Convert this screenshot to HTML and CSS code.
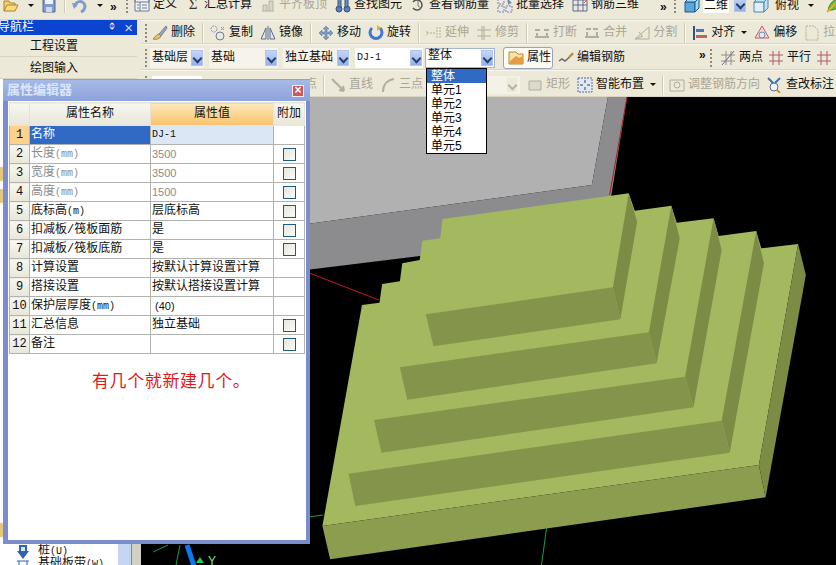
FILE: index.html
```html
<!DOCTYPE html>
<html lang="zh">
<head>
<meta charset="utf-8">
<title>属性编辑器</title>
<link rel="stylesheet" href="styles.css">
</head>
<body>
<div class="app">
  <div class="bar top">
    <div class="quick">
      <svg class="ic" viewBox="0 0 16 16"><path d="M1 14V4h5l1 2h5v2" fill="#f4d06a" stroke="#a8842c"/><path d="M1 14l3-6h11l-3 6z" fill="#f8dc84" stroke="#a8842c"/></svg>
      <i class="caret"></i>
      <svg class="ic" viewBox="0 0 16 16"><path d="M2 1h12v14H2z" fill="#7f9ccf" stroke="#4f6aa0"/><path d="M4 1h8v6H4z" fill="#eef2f8"/><path d="M5 10h6v5H5z" fill="#d4d8e0"/></svg>
      <i class="sep"></i>
      <svg class="ic" viewBox="0 0 16 16"><path d="M3 10C3 3 12 3 13 9c0 3-2 5-4 6" fill="none" stroke="#7e9bd0" stroke-width="3"/><path d="M0 6l6 1-4 5z" fill="#7e9bd0"/></svg>
      <i class="caret"></i>
      <span class="chev">»</span>
    </div>
    <i class="grip"></i>
    <div class="tool"><svg class="ic" viewBox="0 0 16 16"><path d="M1 2h14v12H1z" fill="#eef1f5" stroke="#6d7d90"/><path d="M1 2h14v3H1zM6 5v9M3 8h2M3 11h2M8 8h5M8 11h5" fill="none" stroke="#6d7d90"/></svg><span>定义</span></div>
    <div class="tool"><span class="ic sigma">Σ</span><span>汇总计算</span></div>
    <div class="tool off"><svg class="ic" viewBox="0 0 16 16"><path d="M2 14h12M3 14V8h4v6M9 14V4h4v10" fill="#d8d6c8" stroke="#b4b2a4"/></svg><span>平齐板顶</span></div>
    <div class="tool"><svg class="ic" viewBox="0 0 16 16"><path d="M1 12a3 3 0 1 0 6 0 3 3 0 1 0-6 0M9 12a3 3 0 1 0 6 0 3 3 0 1 0-6 0" fill="#5d7fb8" stroke="#34507c"/><path d="M3 2h3v8H3zM10 2h3v8h-3z" fill="#6f8db8" stroke="#34507c"/></svg><span>查找图元</span></div>
    <div class="tool"><svg class="ic" viewBox="0 0 16 16"><path d="M3 5a5 5 0 1 1 0 6" fill="none" stroke="#555" stroke-width="1.5"/><path d="M8 4v5l3 2" fill="none" stroke="#777"/></svg><span>查看钢筋量</span></div>
    <div class="tool"><svg class="ic" viewBox="0 0 16 16"><path d="M1 1h6v6H1zM1 9h6v6H1zM9 9h6v6H9z" fill="#e8e8ee" stroke="#7c8496" stroke-dasharray="2 1"/><path d="M10 1l5 5-3 1 1 3-2-3z" fill="#6f8db8"/></svg><span>批量选择</span></div>
    <div class="tool"><svg class="ic" viewBox="0 0 16 16"><path d="M1 3h14v11H1zM6 3v11M11 3v11M1 8h14" fill="none" stroke="#5a6a9a"/><path d="M12 1l3 2-3 3" fill="none" stroke="#c46a4a"/></svg><span>钢筋三维</span></div>
    <span class="chev far">»</span>
    <i class="grip"></i>
    <div class="view">
      <svg class="ic" viewBox="0 0 16 16"><path d="M1 5h10v10H1z" fill="#58a8dc" stroke="#1c5a8c"/><path d="M1 5l4-4h10l-4 4zM11 5l4-4v10l-4 4z" fill="#a4d8f0" stroke="#1c5a8c"/></svg>
      <span class="viewfield">二维</span>
      <i class="drop"></i>
      <svg class="ic" viewBox="0 0 16 16"><path d="M1 5h10v10H1z" fill="#e0f0fa" stroke="#4c88b0"/><path d="M1 5l4-4h10l-4 4zM11 5l4-4v10l-4 4z" fill="#bfe2f4" stroke="#4c88b0"/></svg>
      <span class="viewtext">俯视</span>
      <i class="caret"></i>
      <svg class="ic" viewBox="0 0 16 16"><path d="M2 14C3 6 8 2 15 1c0 7-4 12-10 12z" fill="#6cb83c" stroke="#3c8420"/><path d="M1 15l9-9" stroke="#e8b020" stroke-width="2"/></svg>
    </div>
  </div>

  <aside class="nav">
    <header class="navhead"><span class="navtitle">导航栏</span><span class="pin">ᛰ</span><span class="navx">×</span></header>
    <div class="navitem">工程设置</div>
    <div class="navitem">绘图输入</div>
    <div class="tree">
      <div class="treebody">
        <i class="peek"></i>
        <i class="peek"></i>
        <i class="peek low"></i>
        <div class="treerow"><svg class="ic small" viewBox="0 0 12 14"><path d="M2 0h8v6h2L6 14 0 6h2z" fill="#2e64b4"/><path d="M4 2h4v4H4z" fill="#dce8fa"/></svg><span>桩<span class="unit">(U)</span></span></div>
        <div class="treerow"><svg class="ic small" viewBox="0 0 12 14"><path d="M0 3h12M2 3v8M10 3v8" stroke="#2e64b4" fill="none"/></svg><span>基础板带<span class="unit">(W)</span></span></div>
      </div>
      <div class="navscroll"></div>
      <div class="navedge"></div>
    </div>
  </aside>

  <div class="bar row2">
    <i class="grip"></i>
    <div class="tool"><svg class="ic" viewBox="0 0 16 16"><path d="M14 1L7 9l2 2 6-8z" fill="#9aa6c0" stroke="#7a8098"/><path d="M7 9c-2 0-3 2-6 5 3 1 7 0 8-3z" fill="#e0c070" stroke="#a08a40"/></svg><span>删除</span></div>
    <i class="sep"></i>
    <div class="tool"><svg class="ic" viewBox="0 0 16 16"><circle cx="4" cy="4" r="3" fill="none" stroke="#8a96ac" stroke-dasharray="2 1"/><circle cx="10" cy="11" r="4" fill="none" stroke="#6a7c9c"/><path d="M11 2l3 3M14 2l-3 3" stroke="#8a96ac"/></svg><span>复制</span></div>
    <div class="tool"><svg class="ic" viewBox="0 0 16 16"><path d="M6 3v11H1zM10 3v11h5z" fill="#dfe6f0" stroke="#5a6c8c"/><path d="M8 1v14" stroke="#5a6c8c"/></svg><span>镜像</span></div>
    <i class="sep"></i>
    <div class="tool"><svg class="ic" viewBox="0 0 16 16"><path d="M8 1l3 3H9v3h3V5l3 3-3 3V9H9v3h2l-3 3-3-3h2V9H4v2L1 8l3-3v2h3V4H5z" fill="#7f9dc8" stroke="#56709c" stroke-width=".5"/></svg><span>移动</span></div>
    <div class="tool"><svg class="ic" viewBox="0 0 16 16"><path d="M4 3a6 6 0 1 0 8 0" fill="none" stroke="#3f78d0" stroke-width="3"/><path d="M9 0v6l4-3z" fill="#e8b020"/></svg><span>旋转</span></div>
    <i class="sep"></i>
    <div class="tool off"><svg class="ic" viewBox="0 0 16 16"><path d="M1 8h9M11 2v12M14 2v12M1 6v4" fill="none" stroke="#b0ae9e" stroke-dasharray="2 1"/></svg><span>延伸</span></div>
    <div class="tool off"><svg class="ic" viewBox="0 0 16 16"><path d="M1 5h14M1 11h14M8 1v14M6 1v14" fill="none" stroke="#b0ae9e"/></svg><span>修剪</span></div>
    <i class="sep"></i>
    <div class="tool off"><svg class="ic" viewBox="0 0 16 16"><path d="M1 5h5M10 5h5M1 12h14M3 8v4M13 8v4" fill="none" stroke="#b0ae9e" stroke-width="2"/></svg><span>打断</span></div>
    <div class="tool off"><svg class="ic" viewBox="0 0 16 16"><path d="M2 4h5M9 4h5M1 12h14M3 7v5M13 7v5" fill="none" stroke="#b0ae9e" stroke-width="2"/></svg><span>合并</span></div>
    <div class="tool off"><svg class="ic" viewBox="0 0 16 16"><path d="M1 14L15 2v12zM1 14l8-3M5 7l3 4" fill="none" stroke="#b0ae9e"/></svg><span>分割</span></div>
    <i class="sep"></i>
    <div class="tool"><svg class="ic" viewBox="0 0 16 16"><path d="M2 1v14" stroke="#31507c" stroke-width="2"/><path d="M4 4h8v3H4z" fill="#4c78b8"/><path d="M4 10h11v3H4z" fill="#c06060"/></svg><span>对齐</span><i class="caret"></i></div>
    <div class="tool"><svg class="ic" viewBox="0 0 16 16"><path d="M8 1l7 12H1z" fill="#f4d8d8" stroke="#c06060"/><circle cx="8" cy="10" r="3" fill="#dce8f8" stroke="#6a8cc0"/></svg><span>偏移</span></div>
    <div class="tool off"><svg class="ic" viewBox="0 0 16 16"><path d="M2 1h8l4 4v10H2z" fill="none" stroke="#b0ae9e" stroke-dasharray="2 1"/></svg><span>拉</span></div>
  </div>

  <div class="bar row3">
    <i class="grip"></i>
    <div class="combo w54"><span>基础层</span><i class="drop"></i></div>
    <div class="combo w69"><span>基础</span><i class="drop"></i></div>
    <div class="combo w67"><span>独立基础</span><i class="drop"></i></div>
    <div class="combo w68 white"><span class="mono">DJ-1</span><i class="drop"></i></div>
    <div class="combo w70 open"><span>整体</span><i class="drop"></i></div>
    <div class="tool pressed"><svg class="ic" viewBox="0 0 16 16"><path d="M1 2h7l2 2h5v10H1z" fill="#f6e2a8" stroke="#b08a38"/><path d="M2 11l6-5 3 2 4-2v8H2z" fill="#e89c40"/></svg><span>属性</span></div>
    <div class="tool"><svg class="ic" viewBox="0 0 16 16"><path d="M1 11l3-2 3 2 8-7" fill="none" stroke="#686868" stroke-width="1.5"/><path d="M11 7l4-4" stroke="#c09040" stroke-width="2"/></svg><span>编辑钢筋</span></div>
    <span class="chev mid">»</span>
    <i class="grip"></i>
    <div class="tool first"><svg class="ic" viewBox="0 0 16 16"><path d="M1 5h14M1 11h14M6 1v14M11 1v14" stroke="#9a8a88" fill="none"/><path d="M2 15L14 1" stroke="#607090"/></svg><span>两点</span></div>
    <div class="tool"><svg class="ic" viewBox="0 0 16 16"><path d="M1 5h14M1 11h14M5 1v14M11 1v14" stroke="#b05870" fill="none"/></svg><span>平行</span></div>
    <div class="tool"><svg class="ic" viewBox="0 0 16 16"><path d="M1 5h14M1 11h14M5 1v14M11 1v14" stroke="#b05870" fill="none"/></svg></div>
  </div>

  <div class="bar row4">
    <i class="grip"></i>
    <div class="field w50"></div>
    <div class="tool off behind"><svg class="ic" viewBox="0 0 16 16"><circle cx="8" cy="8" r="5" fill="none" stroke="#b0ae9e"/></svg><span>点</span></div>
    <i class="sep"></i>
    <div class="tool off"><svg class="ic" viewBox="0 0 16 16"><path d="M2 2l12 12M14 14l-1-5M14 14l-5-1" fill="none" stroke="#b0ae9e" stroke-width="2"/></svg><span>直线</span></div>
    <div class="tool off"><svg class="ic" viewBox="0 0 16 16"><path d="M3 15C3 8 7 3 14 2" fill="none" stroke="#b0ae9e" stroke-width="2"/></svg><span>三点</span></div>
    <div class="field w35"><i class="drop off"></i></div>
    <div class="tool off"><svg class="ic" viewBox="0 0 16 16"><path d="M2 4h12v9H2z" fill="#dcdacc" stroke="#b0ae9e"/></svg><span>矩形</span></div>
    <div class="tool"><svg class="ic" viewBox="0 0 16 16"><path d="M1 1h14v14H1z" fill="#dfe8f4" stroke="#5a6c8c" stroke-dasharray="2 1"/><path d="M8 3v3M8 10v3M3 8h3M10 8h3" stroke="#33415c"/></svg><span>智能布置</span><i class="caret"></i></div>
    <i class="sep"></i>
    <div class="tool off"><svg class="ic" viewBox="0 0 16 16"><path d="M1 3h14v11H1z" fill="none" stroke="#b0ae9e"/><circle cx="8" cy="8" r="3" fill="none" stroke="#b0ae9e"/></svg><span>调整钢筋方向</span></div>
    <div class="tool"><svg class="ic" viewBox="0 0 16 16"><path d="M1 1l6 6M13 1L8 6" stroke="#3c74c0" stroke-width="2"/><circle cx="7" cy="10" r="4" fill="#eef4fa" stroke="#5a6c8c"/><path d="M10 13l3 3" stroke="#c09040" stroke-width="2"/></svg><span>查改标注</span></div>
  </div>

  <main class="scene">
    <svg class="scene3d" viewBox="141 97 695 468">
      <g transform="translate(310 170) scale(.3355 .3333)">
        <path class="gl" d="M-30-219H888L840 45-30 165z"/>
        <path class="gd" d="M-30 165L840 45 888-219H945L880 190-30 302z"/>
        <path class="axis-r" d="M945-219L893 75M0 310L205 390"/>
        <path class="axis-g" d="M0 1040L40 1035M705 1075L690 1185"/>
        <path class="top" d="M37 1068L155 405 207 398 215 342 268 334 275 280 327 270 335 212 388 205 395 147 950 70 968 122 1077 107 1093 158 1203 145 1218 198 1330 183 1345 235 1455 222 1338 885z"/>
        <path class="bottom" d="M37 1068L60 1168 1358 982 1338 885z"/>
        <path class="side" d="M1338 885L1358 982 1478 315 1455 222z"/>
        <path class="side" d="M1330 183L1353 280 1251 848 1227 752z"/>
        <path class="front" d="M115 911L135 1008 1251 848 1227 752z"/>
        <path class="side" d="M1203 145L1227 240 1143 712 1118 620z"/>
        <path class="front" d="M191 750L213 848 1143 712 1118 620z"/>
        <path class="side" d="M1077 107L1102 205 1033 580 1010 487z"/>
        <path class="front" d="M268 592L290 689 1033 580 1010 487z"/>
        <path class="side" d="M950 70L975 155 925 448 903 352z"/>
        <path class="front" d="M345 433L368 529 925 448 903 352z"/>
      </g>
      <path class="axis-g" d="M153 552L168 545M180 545L176 565"/>
      <path class="axis-b" d="M187 545L194 566"/>
      <path class="arrow" d="M200 557l4 6h-8z"/>
      <text class="axislabel" x="208" y="565">Y</text>
    </svg>
  </main>
</div>

<section class="dialog">
  <header class="dialoghead"><span>属性编辑器</span><span class="close">×</span></header>
  <div class="dialogbody">
    <table class="props">
      <colgroup><col class="c0"><col class="c1"><col class="c2"><col class="c3"></colgroup>
      <thead><tr><th></th><th>属性名称</th><th class="hot">属性值</th><th>附加</th></tr></thead>
      <tbody>
        <tr class="cur"><th>1</th><td class="name">名称</td><td class="val mono">DJ-1</td><td></td></tr>
        <tr class="dim"><th>2</th><td>长度<span class="unit">(mm)</span></td><td class="num">3500</td><td><i class="check"></i></td></tr>
        <tr class="dim"><th>3</th><td>宽度<span class="unit">(mm)</span></td><td class="num">3500</td><td><i class="check"></i></td></tr>
        <tr class="dim"><th>4</th><td>高度<span class="unit">(mm)</span></td><td class="num">1500</td><td><i class="check"></i></td></tr>
        <tr><th>5</th><td>底标高<span class="unit">(m)</span></td><td>层底标高</td><td><i class="check"></i></td></tr>
        <tr><th>6</th><td>扣减板/筏板面筋</td><td>是</td><td><i class="check"></i></td></tr>
        <tr><th>7</th><td>扣减板/筏板底筋</td><td>是</td><td><i class="check"></i></td></tr>
        <tr><th>8</th><td>计算设置</td><td>按默认计算设置计算</td><td></td></tr>
        <tr><th>9</th><td>搭接设置</td><td>按默认搭接设置计算</td><td></td></tr>
        <tr><th>10</th><td>保护层厚度<span class="unit">(mm)</span></td><td class="num ind">(40)</td><td></td></tr>
        <tr><th>11</th><td>汇总信息</td><td>独立基础</td><td><i class="check"></i></td></tr>
        <tr><th>12</th><td>备注</td><td></td><td><i class="check"></i></td></tr>
      </tbody>
    </table>
    <p class="note">有几个就新建几个。</p>
  </div>
</section>

<ul class="menu">
  <li class="sel">整体</li>
  <li>单元1</li>
  <li>单元2</li>
  <li>单元3</li>
  <li>单元4</li>
  <li>单元5</li>
</ul>
</body>
</html>
```

FILE: styles.css
```css
* { box-sizing: border-box; }
html, body { margin: 0; height: 100%; overflow: hidden; background: #000; }
body {
  position: relative;
  width: 836px;
  height: 565px;
  font: 12px/14px "Liberation Mono", "Noto Sans CJK SC", sans-serif;
  color: #111;
}
i { display: block; font-style: normal; }

.app {
  display: grid;
  grid-template-columns: 141px 695px;
  grid-template-rows: 20px 24px 26px 27px 468px;
  width: 836px;
  height: 565px;
  overflow: hidden;
  background: #ece9d8;
}

.bar {
  display: flex;
  align-items: center;
  gap: 7px;
  white-space: nowrap;
  overflow: hidden;
  background: #ece9d8;
  border-bottom: 1px solid #d9d5c2;
  box-shadow: inset 0 1px 0 #f8f6ec;
  padding-left: 4px;
  font-size: 12px;
}
.top {
  grid-column: 1 / 3;
  gap: 8px;
  padding-left: 3px;
  padding-bottom: 6px;
  align-items: flex-end;
  box-shadow: none;
}
.row2, .row3, .row4 { grid-column: 2; }
.row2 { padding-top: 2px; }
.row3 { gap: 5px; padding-top: 2px; }
.row4 { padding-top: 3px; }
.row4 .sep { margin: 0 -1px; }

.ic { flex: none; display: block; width: 16px; height: 16px; }
.small { width: 12px; height: 14px; }
.sigma { font: 15px/14px "Liberation Serif", serif; text-align: center; color: #333; }
.unit { font-size: 10px; }

.tool { flex: none; display: flex; align-items: center; gap: 3px; }
.tool .caret { margin-left: 3px; }
.off { color: #a9a698; }
.caret {
  flex: none;
  width: 0;
  height: 0;
  border: 3px solid transparent;
  border-top: 3px solid #111;
  border-bottom: 0;
}
.sep { flex: none; width: 1px; height: 20px; background: #cfcbb8; box-shadow: 1px 0 0 #fbfaf2; }
.grip { flex: none; width: 2px; height: 18px; margin-right: -2px; border-left: 2px dotted #8d8b7c; }
.chev { flex: none; width: 6px; font: bold 12px/12px "Liberation Sans", sans-serif; }
.far { margin-left: 13px; }
.mid { margin-left: 69px; margin-bottom: 6px; }
.first { margin-left: 5px; }

.quick { flex: none; display: flex; align-items: flex-end; gap: 7px; width: 115px; }
.quick .caret { margin-bottom: 6px; margin-left: 2px; }
.quick .sep { height: 24px; }
.view { flex: none; display: flex; align-items: flex-end; gap: 3px; margin-left: 2px; }
.viewfield { background: #fff; width: 26px; padding-left: 1px; }
.view .drop { margin: 0 4px 1px 2px; }
.viewtext { margin-left: 3px; }
.view .caret { margin: 0 9px 6px 6px; }

.drop {
  flex: none;
  position: relative;
  width: 12px;
  height: 16px;
  background: linear-gradient(#c4d5f6, #95b1e8);
  border: 1px solid #b3c5ee;
}
.drop::after {
  content: "";
  position: absolute;
  left: 2px;
  top: 4px;
  width: 5px;
  height: 5px;
  border: solid #25406f;
  border-width: 0 2px 2px 0;
  transform: rotate(45deg);
}
.drop.off { background: #ece9d8; border-color: #f4f2e6; }
.drop.off::after { border-color: #b5b3a5; }

.combo {
  flex: none;
  display: flex;
  align-items: center;
  justify-content: space-between;
  height: 20px;
  padding: 0 1px 0 2px;
  background: #f6f4ea;
}
.white { background: #fff; }
.w54 { width: 54px; }
.w69 { width: 69px; }
.w67 { width: 67px; }
.w68 { width: 68px; }
.w70 { width: 70px; }
.open { background: #fff; border: 1px solid #a5b4cf; margin-left: -3px; }
.open span { margin-top: -3px; }
.pressed {
  margin-left: 3px;
  width: 50px;
  height: 22px;
  padding-left: 4px;
  background: #fbfaf3;
  border: 1px solid #97a3b8;
  border-radius: 3px;
}

.field { flex: none; display: flex; align-items: center; justify-content: flex-end; height: 18px; background: #f4f2e6; padding-right: 2px; }
.w50 { width: 50px; background: #fff; }
.w35 { width: 35px; margin-left: 55px; }
.behind { margin-left: 77px; }

.nav { grid-column: 1; grid-row: 2 / 6; display: flex; flex-direction: column; background: #ece9d8; }
.navhead {
  flex: none;
  display: flex;
  align-items: center;
  height: 15px;
  margin-right: 4px;
  background: #0a44cf;
  color: #fff;
  font-size: 12px;
  overflow: hidden;
}
.navtitle { margin-left: -2px; flex: 1; }
.pin { margin-right: 9px; font-size: 10px; }
.navx { margin-right: 4px; font: 15px/14px "Liberation Sans", sans-serif; color: #cfdcf8; }
.navitem { flex: none; height: 22px; padding: 5px 0 0 30px; font-size: 12px; border-bottom: 1px solid #d8d4c2; margin-right: 4px; }
.tree { flex: 1; display: flex; min-height: 0; }
.treebody { flex: none; width: 118px; background: #fff; overflow: hidden; padding-top: 88px; }
.peek { width: 4px; height: 14px; margin-bottom: 8px; background: #e4c878; }
.low { margin-top: 320px; }
.treerow { display: flex; align-items: center; gap: 9px; height: 13px; margin-left: 17px; }
.navscroll { flex: none; width: 13px; background: #c7d4f2; }
.navedge { flex: none; width: 10px; background: #d2d0c2; border-left: 1px solid #888; }

.scene { grid-column: 2; grid-row: 5; background: #000; min-height: 0; }
.scene3d { display: block; width: 695px; height: 468px; }
.gl { fill: #b1b1b2; }
.gd { fill: #8c8c8e; }
.scene3d .top { fill: #a3b85f; }
.bottom { fill: #8c9d4f; }
.front { fill: #84944a; }
.side { fill: #7c8c45; }
.axis-r { fill: none; stroke: #b01822; stroke-width: 3; }
.axis-g { fill: none; stroke: #1c9c3c; stroke-width: 1; }
.scene3d g .axis-g { stroke-width: 3; }
.axis-b { fill: none; stroke: #0a78ee; stroke-width: 5; }
.arrow { fill: #28c840; }
.axislabel { fill: #7ce87c; font: 12px "Liberation Sans", sans-serif; }

.dialog {
  position: absolute;
  left: 3px;
  top: 79px;
  width: 307px;
  height: 465px;
  display: flex;
  flex-direction: column;
  background: #7b8dcf;
  border-top: 1px solid #8da0db;
}
.dialoghead {
  flex: none;
  display: flex;
  align-items: center;
  justify-content: space-between;
  height: 21px;
  padding: 0 6px 0 4px;
  background: linear-gradient(#a6bae6, #8ca3dc);
  color: #dbe6f8;
  font-size: 13px;
  font-weight: 700;
}
.close {
  width: 12px;
  height: 12px;
  background: #c65a5f;
  border: 1px solid #f0e8f0;
  color: #fff;
  font: bold 12px/9px "Liberation Sans", sans-serif;
  text-align: center;
}
.dialogbody { flex: 1; margin: 0 4px 4px 5px; padding: 1px 0 0 1px; background: #fff; }

.props { table-layout: fixed; border-collapse: collapse; width: 296px; }
.c0 { width: 20px; }
.c1 { width: 121px; }
.c2 { width: 123px; }
.c3 { width: 31px; }
.props th, .props td {
  height: 19px;
  padding: 0 0 0 1px;
  font-weight: 400;
  white-space: nowrap;
  overflow: hidden;
  border: 1px solid #b2b2ae;
}
.props th { text-align: center; padding: 0; background: linear-gradient(#f8f7f0, #e8e6d8); }
.props thead th { height: 23px; border-color: #e6e4d6; }
.props thead .hot { background: linear-gradient(#fde8bd, #f8c26a); }
.mono { font-size: 10px; }
.props .num { font: 11px/14px "Liberation Sans", sans-serif; }
.props .ind { padding-left: 4px; }
.cur th { background: #fdd28b; }
.cur .name { background: #316ac5; color: #fff; }
.cur .val { background: #dce7f5; }
.dim td { color: #8b8b8b; }
.check {
  width: 13px;
  height: 13px;
  margin: 0 auto;
  background: linear-gradient(135deg, #e6e6de, #fbfbf8);
  border: 1px solid #1f5a80;
}
.note { margin: 19px 0 0 83px; font-size: 17px; line-height: 20px; letter-spacing: .6px; color: #e01818; }

.menu {
  position: absolute;
  left: 426px;
  top: 68px;
  width: 61px;
  height: 86px;
  margin: 0;
  padding: 0;
  list-style: none;
  background: #fff;
  border: 1px solid #000;
  font: 12px/14px "Liberation Sans", "Noto Sans CJK SC", sans-serif;
  color: #000;
}
.menu li { height: 14px; padding-left: 4px; }
.menu .sel { background: #316ac5; color: #fff; }
```
